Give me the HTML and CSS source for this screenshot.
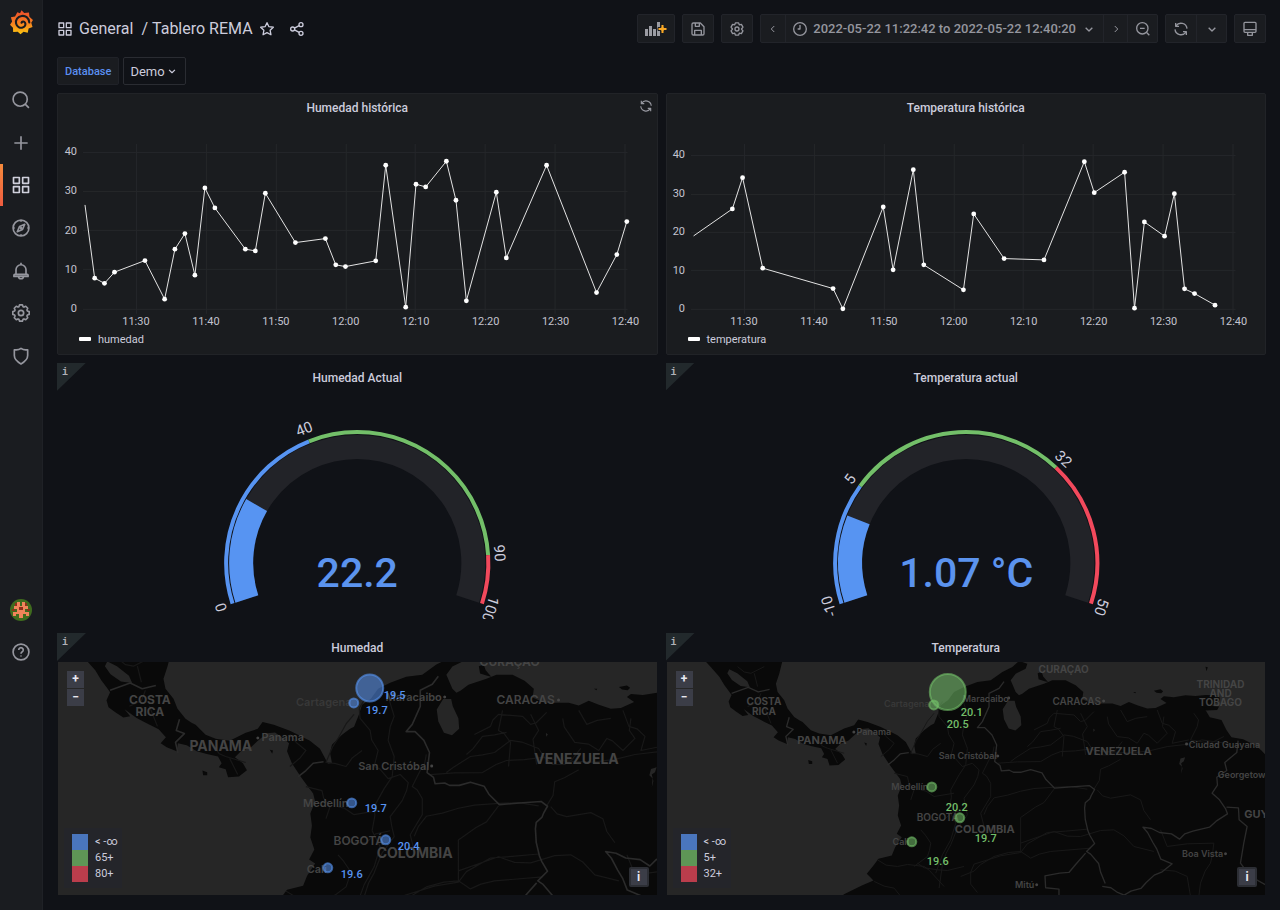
FILE: index.html
```html
<!DOCTYPE html>
<html lang="es">
<head>
    <meta charset="UTF-8">
    <meta name="viewport" content="width=device-width, initial-scale=1">
    <title>Tablero REMA</title>
    <link rel="stylesheet" href="styles.css">
</head>
<body>

<!-- iconos y mapa base -->
<svg class="sprite" aria-hidden="true">
    <symbol id="i-apps" viewBox="0 0 24 24"><path d="M3 3h7v7H3zM14 3h7v7h-7zM3 14h7v7H3zM14 14h7v7h-7z"/></symbol>
    <symbol id="i-search" viewBox="0 0 24 24"><circle cx="11" cy="11" r="8.5"/><path d="M17 17l4.5 4.5"/></symbol>
    <symbol id="i-plus" viewBox="0 0 24 24"><path d="M12 4v16M4 12h16"/></symbol>
    <symbol id="i-compass" viewBox="0 0 24 24"><circle cx="12" cy="12" r="9.5"/><path d="M16.5 7.5l-2.7 6.3-6.3 2.7 2.7-6.3zM12 2.5v2M12 19.5v2M2.5 12h2M19.5 12h2"/><circle cx="12" cy="12" r=".8"/></symbol>
    <symbol id="i-bell" viewBox="0 0 24 24"><path d="M12 2v2.500M6 16v-5.500a6 6 0 0 1 12 0V16M4.500 16h15a1 1 0 0 1 1 1v1.500h-17V17a1 1 0 0 1 1-1zM9 19c.5 3 5.500 3 6 0"/></symbol>
    <symbol id="i-cog" viewBox="0 0 24 24"><path d="M10.300 2.200h3.400l.8 2.200 1.100.5 2.100-1 2.400 2.400-1 2.100.5 1.100 2.200.8v3.400l-2.200.8-.5 1.100 1 2.100-2.400 2.400-2.100-1-1.100.5-.8 2.200h-3.400l-.8-2.200-1.100-.5-2.100 1-2.400-2.400 1-2.100-.5-1.100-2.200-.8v-3.400l2.200-.8.5-1.100-1-2.100 2.400-2.400 2.100 1 1.100-.5z"/><circle cx="12" cy="12" r="3.200"/></symbol>
    <symbol id="i-setting" viewBox="0 0 24 24"><path d="M9.600 2.800h4.800l1 2.900 3.200-.6 2.300 4-2.100 2.900 2.100 2.900-2.300 4-3.200-.6-1 2.900H9.600l-1-2.900-3.200.6-2.300-4L5.200 12 3.100 9.100l2.300-4 3.200.6z"/><circle cx="12" cy="12" r="3"/></symbol>
    <symbol id="i-shield" viewBox="0 0 24 24"><path d="M4 4.500c3 .6 5.600.2 8-1.700 2.400 1.900 5 2.300 8 1.700v7c0 4.500-3.500 7.500-8 10-4.500-2.500-8-5.500-8-10z"/></symbol>
    <symbol id="i-help" viewBox="0 0 24 24"><circle cx="12" cy="12" r="9.500"/><path d="M9.300 9.500a2.700 2.700 0 1 1 4.200 2.300c-1 .6-1.500 1-1.500 2.200M12 16.200v1.300"/></symbol>
    <symbol id="i-star" viewBox="0 0 24 24"><path d="M12 2.500l2.900 6 6.600.9-4.800 4.600 1.200 6.600-5.900-3.100-5.900 3.100 1.200-6.600-4.800-4.600 6.600-.9z"/></symbol>
    <symbol id="i-share" viewBox="0 0 24 24"><circle cx="18" cy="5.500" r="3"/><circle cx="5.500" cy="12" r="3"/><circle cx="18" cy="18.500" r="3"/><path d="M8.200 10.600l7-3.700M8.200 13.400l7 3.700"/></symbol>
    <symbol id="i-save" viewBox="0 0 24 24"><path d="M3 5a2 2 0 0 1 2-2h10.500L21 8.500V19a2 2 0 0 1-2 2H5a2 2 0 0 1-2-2zM8 3v5h6V4M7 21v-7h10v7"/></symbol>
    <symbol id="i-clock" viewBox="0 0 24 24"><circle cx="12" cy="12" r="9.500"/><path d="M12 6v6H8.500"/></symbol>
    <symbol id="i-down" viewBox="0 0 24 24"><path d="M7 10l5 5 5-5"/></symbol>
    <symbol id="i-left" viewBox="0 0 24 24"><path d="M14.500 6l-6 6 6 6"/></symbol>
    <symbol id="i-right" viewBox="0 0 24 24"><path d="M9.500 6l6 6-6 6"/></symbol>
    <symbol id="i-zoomout" viewBox="0 0 24 24"><circle cx="11" cy="11" r="8.500"/><path d="M17 17l4.500 4.500M7.500 11h7"/></symbol>
    <symbol id="i-sync" viewBox="0 0 24 24"><path d="M4 3v5h5M4.500 7.500A9 9 0 0 1 21 11.500M20 21v-5h-5M19.500 16.500A9 9 0 0 1 3 12.500"/></symbol>
    <symbol id="i-monitor" viewBox="0 0 24 24"><path d="M4.500 2h15A1.500 1.500 0 0 1 21 3.500v12a1.500 1.500 0 0 1-1.500 1.500h-15A1.500 1.500 0 0 1 3 15.500v-12A1.500 1.500 0 0 1 4.500 2zM3 13h18M8.500 17v4.500h7V17"/></symbol>

    <marker id="dot" markerUnits="userSpaceOnUse" markerWidth="6" markerHeight="6" refX="3" refY="3"><circle class="dot" cx="3" cy="3" r="2.400"/></marker>

    <symbol id="basemap" viewBox="0 0 1820 800" overflow="visible">
        <path class="land" d="M130 90l20 22 25 28 15 25 15 20 7 10-9 20 5 17 17 13 20 13 17-3-14-18 30 22 25 13 30 15 18 20-13 15 15 10 25 10 3-20 22 5 25 15 25 7 28 6 9 17-7 10 17 5 6 20 27-2 20-16-10-17-20-15 15-15 25-10 18-17 22-18 20-2 20 14 15 13-5 20 12 30 23 35 15 20 15 20 5 20-12 30 4 30-4 30 10 30-13 25 15 10-20 30-10 25-40 10-15 20-20 25 20 20-35 15-55 27v10h1280V388l-25-26-20-17-35-17-35-6-15-22-15-30-35-8-13-22 30-4-10-10 24-16-4-14-40-1-30 3-30-2-35 6-30-3-10 8 18 12-33 15-25 2-30-10-25-10-25 12-25-7h-60l-30-13 3-22-23-20-30-15h-40l-25 10-45 15-20 15-10 5-10-10-15-35 15-20 30-15 5-15-25-8-20 18-30 15-35 25-40 5-40 15-30 15-18 25-22 15-8 25-12 30-10 5-20 15-25 25-5 20 5 25-10 2-20-37-25-20-30-15-20-10-40-15-28-7-12 17-30 10-40 20-35-5-25-10-25-25-10-5-15-10-20-25-10-25-20-25-5-25 10-30 10-40z"/>
        <path class="land" d="M1131 130l12-4 5 14 14 16-10-2-18-6zM1480 182l20-4 8 6-6 6-14-2zM1635 110l7 2-4 12zM1628 234l24-6 24 2-6 10-34 2zM1418 186l8 0-2 4zM442 390l12 4 0 8-10 0zM610 338l8 2-2 8z"/>
        <path class="water" d="M1042 212l-16 26 4 30 14 28 20 6 18-16-2-26-14-30-4-18zM205 118l24 12 30 24 8 18-28-4-26-18-14-20zM1298 296l5 4-4 6zM1560 386l14-4-4 12-8 6 4 16-4 16 2-22-8-8z"/>
        <path class="road" d="M845 215l-12 20 2 25 25 30 4 24 16 26-10 40 14 6 21 24 30-10 20 20-4 20-11 25-30 40 4 24 6 26-30 40-20 50-14 26-11 34-10 70M905 205l6 20 9 30-10 26-5 34 15 40-5 50-20 30-25 45 2 22-7 38 20 40-15 50-25 45-20 55M1000 350l-4 22-11 18-20 40 12 8 13 22 0 40-30 50 10 40M1050 395l16-12 44-28 30-4 30-6 40-30 28 4 42 16 14 22 21 18 30 0 18-12 22-28M1190 240l-10 50 14 8 16 22-5 60M1120 300l40-20 6-16 14-14 60 5 20 20 14-4 26-26M1100 350l16-14 24-31 30-4 30-6M1260 250l20 40-14 22 4 28 5 35M1340 260l4 22 26 38 34 4 26 16 20-30 14 6 26 24 30-30-14-20 4-30M1380 240l20 35 26-10 34-5M1490 240l15 40 20 6 20 19-10 35 50-10M1600 250l14 20-4 20-20 40 60 10 40-20M1010 400l60-4 70-1 34-20 26-10 44-2 46-6 36 8 44 2 46 2 54-7 50-12 70-8 34-12 86 12M1300 478l16-26 4-34 24-10 36-20M1280 478l-50-8-50 2-60 4-40 8-40 12-40 8-20 26-10 24M1180 478l-30 40-26 14-44 31v105l-60 10-80 25-10 24 0 36 20 25M1080 640l100-35 40 14 40 1 60-18 40-2 30 18 30 32 60 15M1080 668l20-26 60-34 54-4 66-6M900 740l40-16 20-20 40-24 44-12 36-3 30 20 26-12 34-8 120-10M1310 480l16 18 24 7 60-10 30 15 10 32 20 28M1500 600l20 50 60-8 80-2-4 34-6 26-16 24-14 36-5 40M1500 720l44 4 36 16 10 60M780 480l16 4 24 16 60-10M800 560l14 10 36 0 24-22 36-8M780 600l14 16 16 24-4 22-6 18-40 30M770 700l20 14 40 6 30 2 50-12M700 430l40 10 4 18 16 22-10 30M650 690l26 16 34 4 30-6 50 6 16 12 44 48M640 755l30 14 30 6 20 25M230 110l20 16 20 4 40-20M280 130l10 40M300 190l-10 26-30 14M310 230l20 50M470 330l14 18 16 7 50 15M510 360l20 40M660 300l16 20 24 20-14 18-26 22M820 250l-20 24-20 36-14 22-16 38 22 2 28 8 16-22 24-18"/>
        <path class="border" d="M212 190l50-18 30 14 34-8M385 262l-8 28 20 8-22 22 6 26M744 368l-26 4-18 18-20 16M1030 155l-15 20-30 15 0 40-20 45-15 18 22 0 22 22 14 30-6 50 16 12 4 16 24-2 12 6 24 0 28-8 34 10 12 20 26 26 50-4 54-4 16 12-10 18-4 10-14 12-2 16 2 34 8 34 6 14 14 24-24 24 12 8 24 28 6 26 14 34M1275 670l-30 34-20 24-28 2-44 8 2 36 40 4v22M1325 770l26 4 20 14 20 8 20-12 30-8 16-18 24-22 24-10 30-24-34-14-12-30-12-20-16-30-14-16 26 4 24 12 36 4 24 16 16-16 24-8 50-12 20-18 34-22-6-16-18-26-22-20 16-24-2-24 30-20-6-24 16-14 20-16 4-36M1698 532l36 2 2 36 24 20-10 50-10 60 30 40 50 28"/>
    </symbol>
</svg>

<div class="app">
    <aside class="sidebar">
        <a class="logo" href="#" aria-label="Inicio">
            <svg viewBox="0 0 24 24">
                <defs>
                    <linearGradient id="flame" x1="0" y1="0" x2="0" y2="1">
                        <stop offset="0" stop-color="#ee4a2c"/>
                        <stop offset=".55" stop-color="#f58220"/>
                        <stop offset="1" stop-color="#fcc70f"/>
                    </linearGradient>
                </defs>
                <path fill="url(#flame)" d="M12 .2l2.600 2.600 4.600-.4.400 4 3.400 3.200-1.600 2.600 1.200 4.200-3.800 1.400-.8 4-4-1-3 2.600-2.600-2.600-4.400.4-.2-4.200L1 14.200l2-3.200-1.200-4 4-.8L8 2.200l2.600.8z"/>
                <path class="swirl" d="M19.500 12c-.3-4.800-4-6.800-7.300-6.300-4 .6-6.200 4-5.400 7.300.7 3 3.700 4.700 6.300 3.900 2.300-.7 3.300-3 2.300-4.700-.9-1.600-3.100-1.300-3.400.1"/>
            </svg>
        </a>
        <nav class="menu">
            <a href="#" aria-label="Buscar"><svg class="icon"><use href="#i-search"/></svg></a>
            <a href="#" aria-label="Crear"><svg class="icon"><use href="#i-plus"/></svg></a>
            <a href="#" class="active" aria-label="Tableros"><svg class="icon"><use href="#i-apps"/></svg></a>
            <a href="#" aria-label="Explorar"><svg class="icon"><use href="#i-compass"/></svg></a>
            <a href="#" aria-label="Alertas"><svg class="icon"><use href="#i-bell"/></svg></a>
            <a href="#" aria-label="Ajustes"><svg class="icon"><use href="#i-cog"/></svg></a>
            <a href="#" aria-label="Administrador"><svg class="icon"><use href="#i-shield"/></svg></a>
        </nav>
        <div class="menu-bottom">
            <a href="#" aria-label="Perfil">
                <svg class="avatar" viewBox="0 0 22 22">
                    <circle cx="11" cy="11" r="11" fill="#3f6b1e"/>
                    <path fill="#f0855a" d="M7 3h3v4h2V3h3v4h3v3h-3v3h4v4h-3v-2h-3v4h-4v-4H6v2H3v-4h4v-3H4V7h3z"/>
                    <path fill="#8c2f1a" d="M9 8h4v3H9zM5 4h2v3H5zM15 4h2v3h-2zM2 10h3v2H2zM17 10h3v2h-3z"/>
                </svg>
            </a>
            <a href="#" aria-label="Ayuda"><svg class="icon"><use href="#i-help"/></svg></a>
        </div>
    </aside>

    <main class="main">
        <header class="topbar">
            <div class="crumbs">
                <svg class="icon small"><use href="#i-apps"/></svg>
                <h1><a href="#">General</a><span>/</span><a href="#">Tablero REMA</a></h1>
                <button class="plain" aria-label="Favorito"><svg class="icon small"><use href="#i-star"/></svg></button>
                <button class="plain share" aria-label="Compartir"><svg class="icon small"><use href="#i-share"/></svg></button>
            </div>
            <div class="tools">
                <div class="group">
                    <button class="add" aria-label="Agregar panel">
                        <svg viewBox="0 0 22 14">
                            <path fill="#9b9ca3" d="M0 7h3v7H0zM4 4h3v10H4zM8 7h3v7H8zM12 0h3v14h-3z"/>
                            <path fill="#f9a825" stroke="#1a1c20" stroke-width="1" d="M16 2.500h3v3h3v3h-3v3h-3v-3h-3v-3h3z"/>
                        </svg>
                    </button>
                </div>
                <div class="group"><button aria-label="Guardar"><svg class="icon small"><use href="#i-save"/></svg></button></div>
                <div class="group"><button aria-label="Configuración"><svg class="icon small"><use href="#i-setting"/></svg></button></div>
                <div class="group">
                    <button class="narrow" aria-label="Atrás"><svg class="icon small"><use href="#i-left"/></svg></button>
                    <button class="range">
                        <svg class="icon small"><use href="#i-clock"/></svg>
                        <span>2022-05-22 11:22:42 to 2022-05-22 12:40:20</span>
                        <svg class="icon small"><use href="#i-down"/></svg>
                    </button>
                    <button class="narrow" aria-label="Adelante"><svg class="icon small"><use href="#i-right"/></svg></button>
                    <button aria-label="Alejar"><svg class="icon small"><use href="#i-zoomout"/></svg></button>
                </div>
                <div class="group">
                    <button aria-label="Actualizar"><svg class="icon small"><use href="#i-sync"/></svg></button>
                    <button class="interval" aria-label="Intervalo"><svg class="icon small"><use href="#i-down"/></svg></button>
                </div>
                <div class="group"><button aria-label="Modo TV"><svg class="icon small"><use href="#i-monitor"/></svg></button></div>
            </div>
        </header>

        <div class="filters">
            <label for="db">Database</label>
            <div class="select">
                <select id="db"><option>Demo</option></select>
                <svg class="icon tiny"><use href="#i-down"/></svg>
            </div>
        </div>

        <div class="grid">
            <!-- series -->
            <section class="panel filled">
                <h2>Humedad histórica</h2>
                <svg class="icon tiny loading"><use href="#i-sync"/></svg>
                <svg class="chart" viewBox="58 122 599 208">
                    <path class="lines" d="M83 152.500h545M83 191.500h545M83 230.500h545M83 269.500h545M83 309.500h545M136.500 144v170M206.500 144v170M276.500 144v170M346.500 144v170M415.500 144v170M485.500 144v170M555.500 144v170M625.500 144v170"/>
                    <g class="axis-y"><text x="77" y="155">40</text><text x="77" y="194">30</text><text x="77" y="234">20</text><text x="77" y="273">10</text><text x="77" y="312">0</text></g>
                    <g class="axis-x"><text x="136" y="325">11:30</text><text x="206" y="325">11:40</text><text x="276" y="325">11:50</text><text x="346" y="325">12:00</text><text x="416" y="325">12:10</text><text x="486" y="325">12:20</text><text x="556" y="325">12:30</text><text x="626" y="325">12:40</text></g>
                    <polyline class="serie" points="85,205 94.700,278.300 104.500,283.500 114.500,272.300 145,260.700 164.700,299.300 175,249.300 185,233.700 195,275.300 205,188 215,208 245.500,249.300 255.500,251 265.500,193.300 295.600,242.700 325.600,238.700 336,265 345.700,266.700 376,261 386,165.300 406,307.300 416.300,184.300 426,187 446.700,161.300 456.300,200.300 466.700,301 496.700,192.300 506.700,258 547,165.300 597,292.700 617.300,254.700 627.300,221.700"/>
                </svg>
                <div class="legend"><i></i>humedad</div>
            </section>

            <section class="panel filled">
                <h2>Temperatura histórica</h2>
                <svg class="chart" viewBox="667 122 599 208">
                    <path class="lines" d="M691 155.500h545M691 194.500h545M691 232.500h545M691 270.500h545M691 309.500h545M744.500 144v170M814.500 144v170M884.500 144v170M954.500 144v170M1023.500 144v170M1093.500 144v170M1163.500 144v170M1233.500 144v170"/>
                    <g class="axis-y"><text x="685" y="158">40</text><text x="685" y="197">30</text><text x="685" y="235">20</text><text x="685" y="274">10</text><text x="685" y="312">0</text></g>
                    <g class="axis-x"><text x="744" y="325">11:30</text><text x="814" y="325">11:40</text><text x="884" y="325">11:50</text><text x="954" y="325">12:00</text><text x="1024" y="325">12:10</text><text x="1094" y="325">12:20</text><text x="1164" y="325">12:30</text><text x="1234" y="325">12:40</text></g>
                    <polyline class="serie" points="693.600,236 732.400,209 742.600,177.700 762.800,268.300 833.200,288.700 843,309 883.400,207 893.300,270 913.500,169.700 924,265 963.700,290 974,214 1004.400,258.700 1044.300,260 1084.700,161.700 1094.600,192.700 1125,172.300 1134.900,308.300 1144.800,222 1165,236.300 1174.800,193.700 1185,289 1195,293.700 1215.500,305.300"/>
                </svg>
                <div class="legend"><i></i>temperatura</div>
            </section>

            <!-- medidores, pathLength=100 para usar porcentajes -->
            <section class="panel">
                <span class="corner">i</span>
                <h2>Humedad Actual</h2>
                <svg class="gauge" viewBox="-299 -171 598 227">
                    <path class="track" d="M-110.300 35.800A116 116 0 1 1 110.300 35.800"/>
                    <path class="fill" pathLength="100" stroke-dasharray="22.200 100" d="M-110.300 35.800A116 116 0 1 1 110.300 35.800"/>
                    <path class="ring blue" pathLength="100" stroke-dasharray="40 100" d="M-124.600 40.500A131 131 0 1 1 124.600 40.500"/>
                    <path class="ring green" pathLength="100" stroke-dasharray="50 100" stroke-dashoffset="-40" d="M-124.600 40.500A131 131 0 1 1 124.600 40.500"/>
                    <path class="ring red" pathLength="100" stroke-dasharray="10 100" stroke-dashoffset="-90" d="M-124.600 40.500A131 131 0 1 1 124.600 40.500"/>
                    <g class="marks">
                        <text transform="translate(-136 44) rotate(-108)">0</text>
                        <text transform="translate(-53 -134) rotate(-22)">40</text>
                        <text transform="translate(142 -10) rotate(86)">90</text>
                        <text transform="translate(133 46) rotate(108)">100</text>
                    </g>
                    <text class="value" x="0" y="24">22.2</text>
                </svg>
            </section>

            <section class="panel">
                <span class="corner">i</span>
                <h2>Temperatura actual</h2>
                <svg class="gauge" viewBox="-299 -171 598 227">
                    <path class="track" d="M-110.300 35.800A116 116 0 1 1 110.300 35.800"/>
                    <path class="fill" pathLength="100" stroke-dasharray="18.450 100" d="M-110.300 35.800A116 116 0 1 1 110.300 35.800"/>
                    <path class="ring blue" pathLength="100" stroke-dasharray="25 100" d="M-124.600 40.500A131 131 0 1 1 124.600 40.500"/>
                    <path class="ring green" pathLength="100" stroke-dasharray="45 100" stroke-dashoffset="-25" d="M-124.600 40.500A131 131 0 1 1 124.600 40.500"/>
                    <path class="ring red" pathLength="100" stroke-dasharray="30 100" stroke-dashoffset="-70" d="M-124.600 40.500A131 131 0 1 1 124.600 40.500"/>
                    <g class="marks">
                        <text transform="translate(-137 43) rotate(-108)">-10</text>
                        <text transform="translate(-116 -84) rotate(-54)">5</text>
                        <text transform="translate(97 -104) rotate(43)">32</text>
                        <text transform="translate(135 44) rotate(108)">50</text>
                    </g>
                    <text class="value" x="0" y="24">1.07 °C</text>
                </svg>
            </section>

            <!-- mapas -->
            <section class="panel">
                <span class="corner">i</span>
                <h2>Humedad</h2>
                <div class="map">
                    <svg class="tiles near" viewBox="0 0 599 233">
                        <g transform="translate(-33 -48) scale(.4016)"><use href="#basemap" width="1820" height="800"/></g>
                        <g class="country">
                            <text x="92" y="42" class="minor">COSTA</text><text x="92" y="54" class="minor">RICA</text><text x="163" y="89">PANAMA</text>
                            <text x="519" y="102">VENEZUELA</text><text x="357" y="196">COLOMBIA</text><text x="452" y="4" class="minor">CURAÇAO</text>
                        </g>
                        <g class="city">
                            <text x="225" y="79">Panama</text><text x="266" y="44" class="soft">Cartagena</text><text x="356" y="39">Maracaibo</text>
                            <text x="468" y="42" class="capital">CARACAS</text><text x="336" y="108">San Cristóbal</text>
                            <text x="268" y="145">Medellín</text><text x="301" y="183" class="capital">BOGOTÁ</text><text x="259" y="211">Cali</text>
                            <circle cx="200" cy="76" r="1.500"/><circle cx="387" cy="35" r="1.500"/><circle cx="501" cy="38" r="1.500"/><circle cx="374" cy="104" r="1.500"/>
                        </g>
                        <g class="pins blue">
                            <circle cx="312" cy="26" r="13.500"/><circle cx="296" cy="41" r="4.500"/><circle cx="294" cy="141" r="4.500"/>
                            <circle cx="328" cy="178" r="4.500"/><circle cx="270" cy="206" r="4.500"/>
                            <text x="337" y="37">19.5</text><text x="319" y="52">19.7</text><text x="318" y="150">19.7</text>
                            <text x="351" y="188">20.4</text><text x="294" y="216">19.6</text>
                        </g>
                    </svg>
                    <div class="zoom"><button aria-label="Acercar">+</button><button aria-label="Alejar">−</button></div>
                    <ul class="scale"><li class="blue">&lt; -∞</li><li class="green">65+</li><li class="red">80+</li></ul>
                    <button class="info" aria-label="Créditos">i</button>
                </div>
            </section>

            <section class="panel">
                <span class="corner">i</span>
                <h2>Temperatura</h2>
                <div class="map">
                    <svg class="tiles far" viewBox="0 0 599 233">
                        <g transform="translate(-6 -32) scale(.3333)"><use href="#basemap" width="1820" height="800"/></g>
                        <g class="country">
                            <text x="97" y="43" class="minor">COSTA</text><text x="97" y="53" class="minor">RICA</text><text x="155" y="82">PANAMA</text>
                            <text x="452" y="93">VENEZUELA</text><text x="318" y="171">COLOMBIA</text><text x="397" y="11" class="minor">CURAÇAO</text>
                            <text x="554" y="26" class="minor">TRINIDAD</text><text x="554" y="35" class="minor">AND</text><text x="554" y="44" class="minor">TOBAGO</text><text x="590" y="156">GUY</text>
                        </g>
                        <g class="city">
                            <text x="207" y="73">Panama</text><text x="240" y="45" class="soft">Cartagena</text><text x="319" y="40">Maracaibo</text>
                            <text x="410" y="43" class="capital">CARACAS</text><text x="301" y="97">San Cristóbal</text>
                            <text x="243" y="128">Medellín</text><text x="271" y="159" class="capital">BOGOTÁ</text><text x="234" y="183">Cali</text>
                            <text x="558" y="86">Ciudad Guayana</text><text x="578" y="116">Georgetown</text>
                            <text x="536" y="195">Boa Vista</text><text x="358" y="226">Mitú</text>
                            <circle cx="187" cy="70" r="1.500"/><circle cx="342" cy="36" r="1.500"/><circle cx="437" cy="39" r="1.500"/><circle cx="331" cy="94" r="1.500"/>
                            <circle cx="520" cy="82" r="1.500"/><circle cx="559" cy="192" r="1.500"/><circle cx="370" cy="223" r="1.500"/>
                        </g>
                        <g class="pins green">
                            <circle cx="281" cy="30" r="18"/><circle cx="267" cy="43" r="4.500"/><circle cx="265" cy="125" r="4.500"/>
                            <circle cx="293" cy="156" r="4.500"/><circle cx="245" cy="180" r="4.500"/>
                            <text x="305" y="54">20.1</text><text x="291" y="66">20.5</text><text x="290" y="149">20.2</text>
                            <text x="319" y="180">19.7</text><text x="271" y="203">19.6</text>
                        </g>
                    </svg>
                    <div class="zoom"><button aria-label="Acercar">+</button><button aria-label="Alejar">−</button></div>
                    <ul class="scale"><li class="blue">&lt; -∞</li><li class="green">5+</li><li class="red">32+</li></ul>
                    <button class="info" aria-label="Créditos">i</button>
                </div>
            </section>
        </div>
    </main>
</div>
</body>
</html>
```
FILE: styles.css
```css
* {
    box-sizing: border-box;
    padding: 0;
    margin: 0;
}

body {
    background: #101217;
    color: #ccccdc;
    font-family: Roboto, "Liberation Sans", sans-serif;
    font-size: 12px;
}

a {
    color: inherit;
    text-decoration: none;
}

button {
    border: 0;
    background: none;
    color: inherit;
    font: inherit;
    cursor: pointer;
}

.sprite {
    position: absolute;
    width: 0;
    height: 0;
}

.icon {
    display: block;
    flex: none;
    width: 20px;
    height: 20px;
    fill: none;
    stroke: currentColor;
    stroke-width: 2;
    stroke-linejoin: round;
}

.icon.small {
    width: 16px;
    height: 16px;
}

.icon.tiny {
    width: 14px;
    height: 14px;
}

.app {
    display: flex;
    min-height: 100vh;
}

/* barra lateral */
.sidebar {
    display: flex;
    flex-direction: column;
    flex: none;
    width: 43px;
    padding-bottom: 238px;
    background: #1a1c20;
    border-right: 1px solid #1f2126;
    color: #95969e;
}

.logo {
    display: flex;
    justify-content: center;
    height: 79px;
    padding-top: 10px;
}

.logo svg {
    width: 25px;
    height: 25px;
}

.swirl {
    fill: none;
    stroke: #1a1c20;
    stroke-width: 2;
    stroke-linecap: round;
}

.menu {
    display: flex;
    flex-direction: column;
    justify-content: space-between;
    height: 298px;
}

.menu a,
.menu-bottom a {
    display: flex;
    align-items: center;
    justify-content: center;
    height: 42px;
}

.menu .active {
    color: #d0d0dc;
    background: linear-gradient(#f58a3c, #ee5c40) left / 3px 100% no-repeat;
}

.menu-bottom {
    margin-top: auto;
}

.avatar {
    width: 22px;
    height: 22px;
}

/* cabecera */
.main {
    flex: 1;
    min-width: 0;
    padding: 14px 14px 15px;
}

.topbar {
    display: flex;
    align-items: center;
    justify-content: space-between;
    height: 29px;
}

.crumbs {
    display: flex;
    align-items: center;
    gap: 6px;
}

.crumbs h1 {
    font-size: 16px;
    font-weight: 400;
    white-space: nowrap;
}

.crumbs h1 span {
    margin: 0 4px 0 8px;
}

.share {
    margin-left: 8px;
}

.tools {
    display: flex;
    gap: 7px;
    color: #95969e;
}

.group {
    display: flex;
    height: 29px;
    background: #1a1c20;
    border: 1px solid #22242a;
    border-radius: 2px;
}

.group button {
    display: flex;
    align-items: center;
    justify-content: center;
    width: 30px;
}

.group button + button {
    border-left: 1px solid #22242a;
}

.group .add {
    width: 36px;
}

.add svg {
    width: 22px;
    height: 14px;
}

.group .narrow {
    width: 24px;
}

.group .narrow .icon {
    width: 12px;
}

.group .range {
    gap: 5px;
    width: auto;
    padding: 0 6px;
    font-size: 13px;
    font-weight: 500;
    white-space: nowrap;
}

.filters {
    display: flex;
    gap: 4px;
    margin: 14px 0 8px;
}

.filters label {
    height: 28px;
    padding: 0 7px;
    background: #1a1c20;
    border: 1px solid #202228;
    border-radius: 2px;
    color: #5b8ff0;
    font-size: 11px;
    font-weight: 500;
    line-height: 28px;
}

.select {
    position: relative;
}

.select select {
    appearance: none;
    width: 63px;
    height: 28px;
    padding: 0 6px;
    background: #101217;
    border: 1px solid #2a2c32;
    border-radius: 2px;
    color: #ccccdc;
    font: 13px Roboto, sans-serif;
}

.select .icon {
    position: absolute;
    top: 7px;
    right: 7px;
    pointer-events: none;
}

/* paneles */
.grid {
    display: grid;
    grid-template-columns: 1fr 1fr;
    gap: 8px;
}

.panel {
    position: relative;
    min-width: 0;
    border: 1px solid transparent;
    border-radius: 2px;
}

.filled {
    background: #1a1c1f;
    border-color: #212327;
}

.panel h2 {
    height: 28px;
    font-size: 12px;
    font-weight: 500;
    line-height: 28px;
    text-align: center;
}

.loading {
    position: absolute;
    top: 5px;
    right: 4px;
    color: #95969e;
}

.corner {
    position: absolute;
    top: -1px;
    left: -1px;
    width: 29px;
    height: 28px;
    padding: 4px 0 0 5px;
    background: #22292c;
    clip-path: polygon(0 0, 100% 0, 0 100%);
    color: #b0b1b8;
    font: bold 10px "Liberation Mono", monospace;
}

/* graficas */
.chart,
.gauge,
.tiles {
    display: block;
    width: 100%;
    height: auto;
}

.lines {
    fill: none;
    stroke: #25272a;
}

.chart text {
    fill: #c4c4d0;
    font-size: 11px;
}

.axis-y {
    text-anchor: end;
}

.axis-x {
    text-anchor: middle;
}

.serie {
    fill: none;
    stroke: #e4e4e4;
    marker-mid: url(#dot);
    marker-end: url(#dot);
}

.dot {
    fill: #fff;
}

.legend {
    display: flex;
    align-items: center;
    gap: 7px;
    height: 24px;
    padding: 0 0 5px 21px;
    font-size: 11px;
}

.legend i {
    width: 12px;
    height: 4px;
    background: #fff;
    border-radius: 1px;
}

/* medidores */
.gauge {
    margin-bottom: 5px;
}

.gauge path {
    fill: none;
}

.gauge .track,
.gauge .fill {
    stroke: #222328;
    stroke-width: 24;
}

.gauge .fill {
    stroke: #5794f2;
}

.ring {
    stroke-width: 4;
}

.ring.blue {
    stroke: #5794f2;
}

.ring.green {
    stroke: #73bf69;
}

.ring.red {
    stroke: #f2495c;
}

.gauge text {
    text-anchor: middle;
}

.marks text {
    fill: #ccccdc;
    font-size: 15px;
    dominant-baseline: central;
}

.gauge .value {
    fill: #5b93ee;
    font-size: 41px;
    font-weight: 500;
}

/* mapas */
.map {
    position: relative;
    background: #262626;
}

.land {
    fill: #090909;
}

.water {
    fill: #262626;
}

.road,
.border {
    fill: none;
    stroke: #181818;
    stroke-width: 3;
    stroke-linejoin: round;
}

.border {
    stroke: #2b2b2b;
    stroke-width: 4;
}

.tiles text {
    text-anchor: middle;
}

.country,
.city {
    fill: #444;
    font-family: Inter, sans-serif;
    font-weight: 700;
}

.city {
    font-weight: 600;
}

.soft {
    fill: #383838;
}

.near .country {
    font-size: 14px;
}

.near .city {
    font-size: 11px;
}

.near .minor,
.near .capital {
    font-size: 12px;
}

.far .country {
    font-size: 11px;
}

.far .minor,
.far .capital {
    font-size: 10px;
}

.far .city {
    font-size: 9px;
}

.pins circle {
    fill-opacity: .55;
    stroke-width: 2;
    stroke-opacity: .6;
}

.pins text {
    font-size: 11px;
    font-weight: 500;
}

.pins.blue {
    fill: #5794f2;
}

.pins.green {
    fill: #73bf69;
}

.pins.blue circle {
    stroke: #5794f2;
}

.pins.green circle {
    stroke: #73bf69;
}

.zoom {
    position: absolute;
    top: 9px;
    left: 9px;
    display: grid;
    gap: 1px;
}

.zoom button,
.info {
    width: 17px;
    height: 17px;
    background: #3b3d47;
    color: #e8e8f0;
    font-weight: 700;
    line-height: 17px;
}

.scale {
    position: absolute;
    bottom: 7px;
    left: 6px;
    padding: 6px 8px;
    width: 58px;
    background: #24252a;
    list-style: none;
}

.scale li {
    height: 16px;
    padding-left: 7px;
    border-left: 16px solid;
    font-size: 11px;
    line-height: 16px;
    white-space: nowrap;
}

.scale .blue {
    border-color: #4a76bd;
}

.scale .green {
    border-color: #5e9656;
}

.scale .red {
    border-color: #ba3d4c;
}

.info {
    position: absolute;
    right: 8px;
    bottom: 8px;
    width: 20px;
    height: 20px;
    border: 2px solid #2c2e34;
    border-radius: 2px;
    line-height: 16px;
}

@media (max-width: 1000px) {
    .topbar {
        flex-wrap: wrap;
        height: auto;
        gap: 8px;
    }

    .grid {
        grid-template-columns: 1fr;
    }
}
```
